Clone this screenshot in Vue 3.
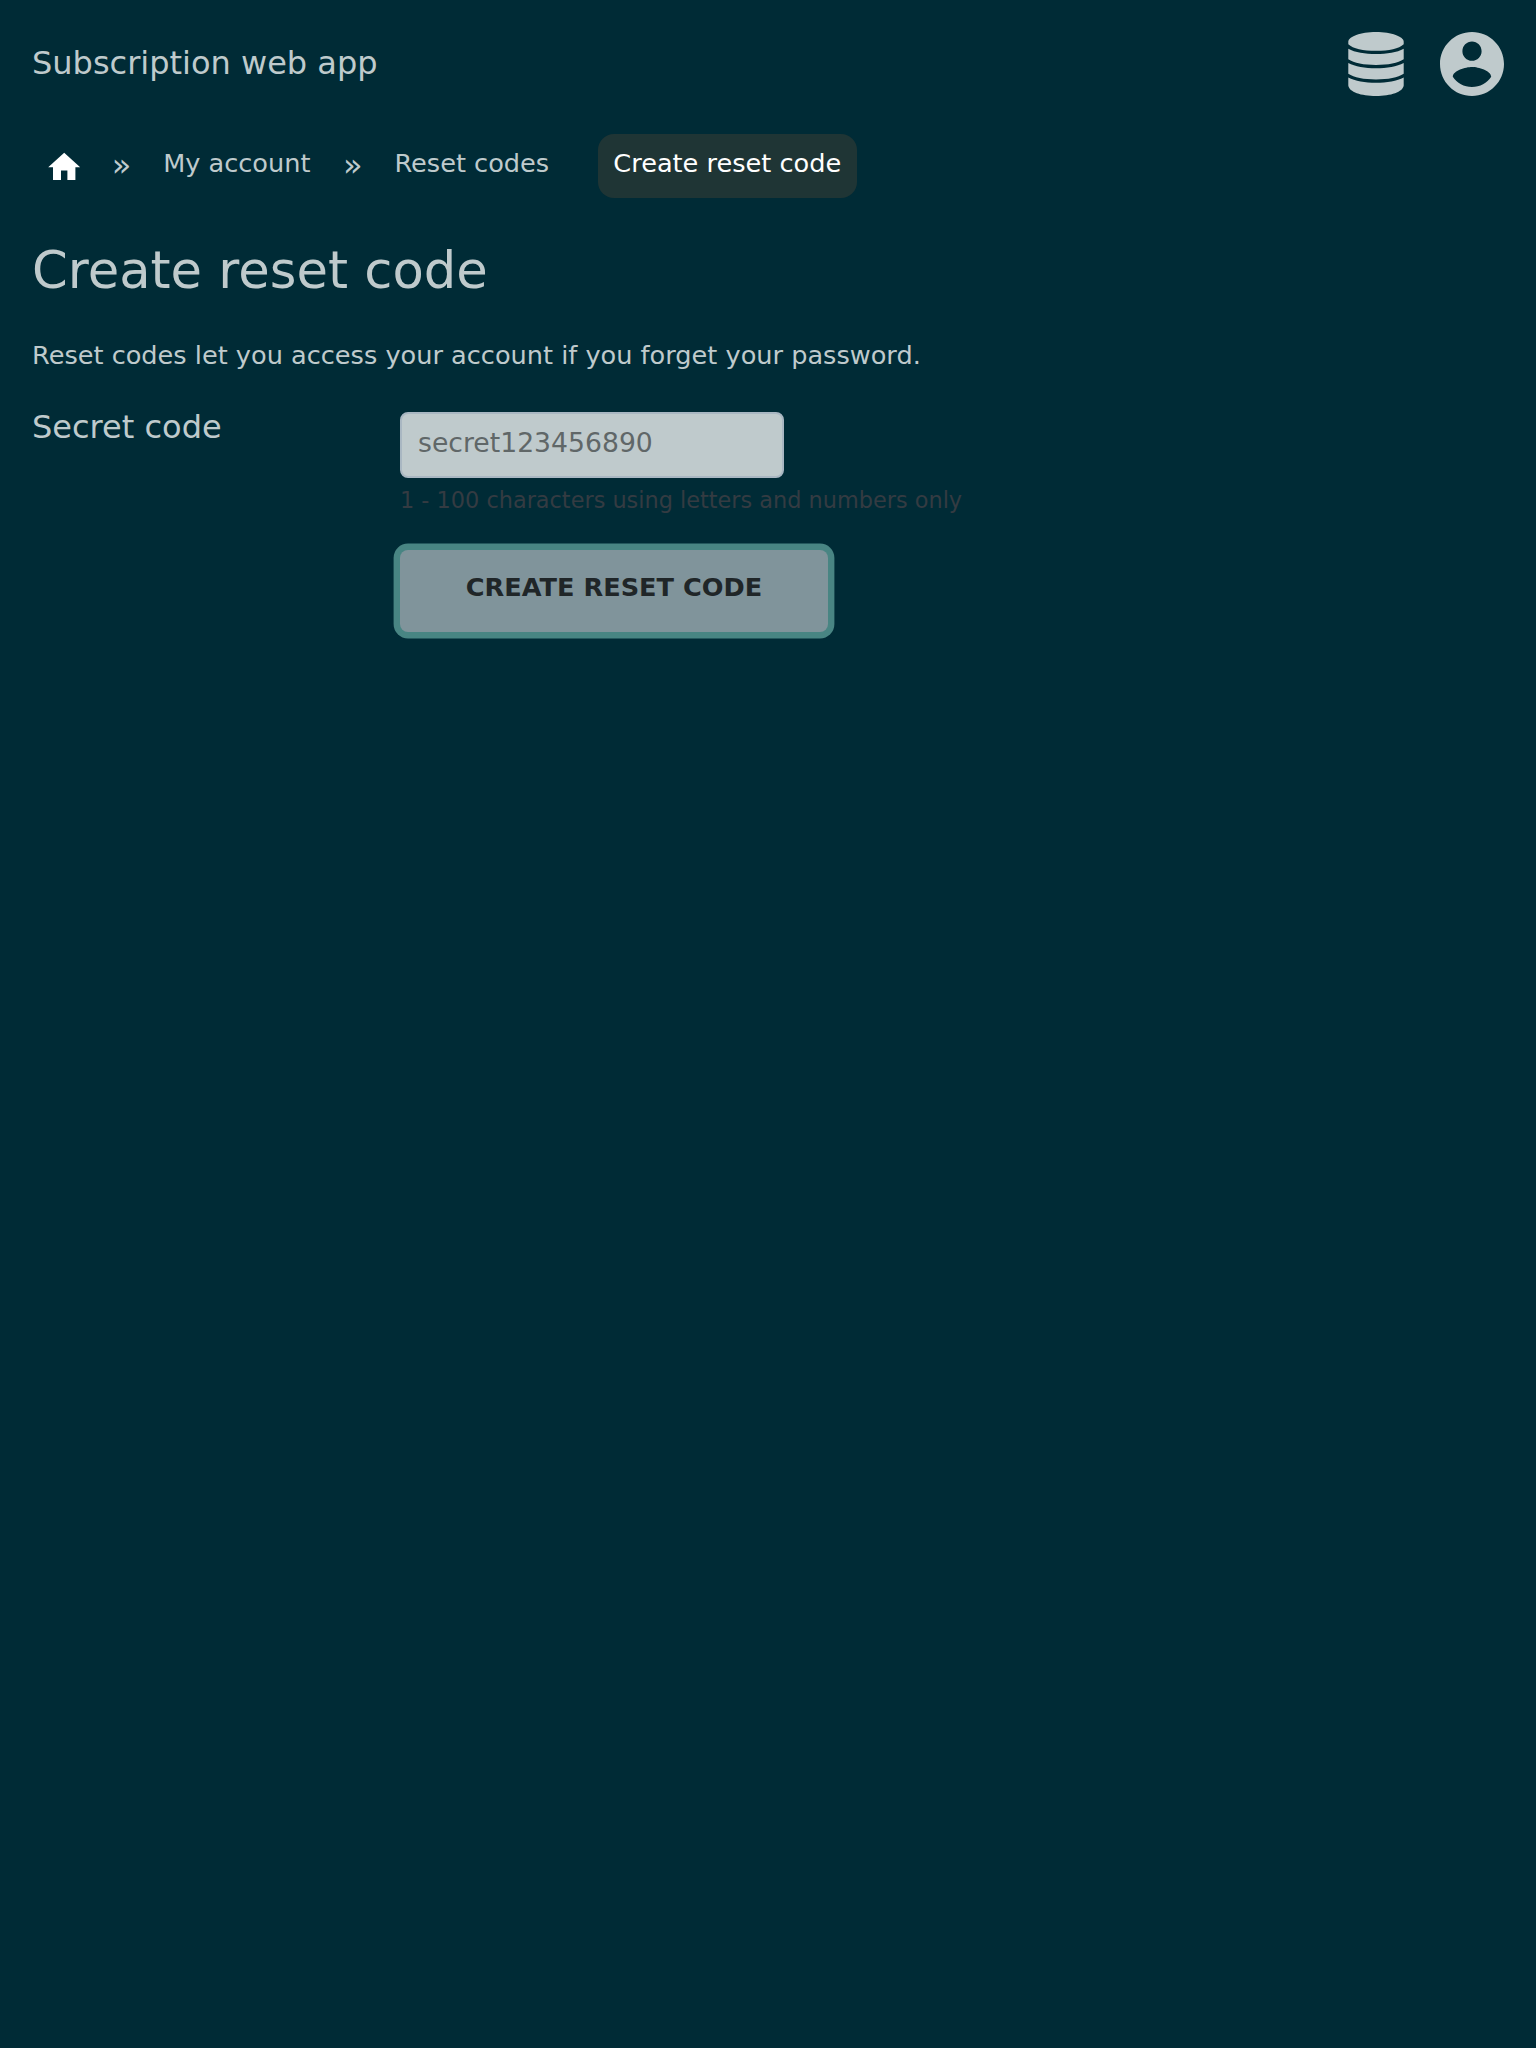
<script setup>
const trail = ['My account', 'Reset codes']
</script>

<template>
  <div class="page">
    <header class="bar">
      <a class="brand">Subscription web app</a>
      <nav class="icons">
        <svg class="db" viewBox="0 0 56 64">
          <path d="M28 0C43.500 0 55.700 4.600 55.700 9.700V12.200C51 16.700 41 18.800 28 18.800S5 16.700.3 12.200V9.700C.3 4.600 12.500 0 28 0z" />
          <path d="M.3 16.700C7 20.400 17 22 28 22S49 20.400 55.700 16.700V27.200C50 31 40 32.900 28 32.900S6 31 .3 27.200z" />
          <path d="M.3 31.100C7 34.800 17 36.300 28 36.300S49 34.800 55.700 31.100V41.700C50 45.500 40 47.400 28 47.400S6 45.500.3 41.700z" />
          <path d="M.3 45.500C7 49.200 17 50.700 28 50.700S49 49.200 55.700 45.500V53.500C54.700 60 43 64 28 64S1.300 60 .3 53.500z" />
        </svg>
        <svg class="user" viewBox="2 2 20 20">
          <path d="M12 2C6.480 2 2 6.480 2 12s4.480 10 10 10 10-4.480 10-10S17.520 2 12 2zm0 3c1.660 0 3 1.340 3 3s-1.340 3-3 3-3-1.340-3-3 1.340-3 3-3zm0 14.200c-2.500 0-4.710-1.280-6-3.220.03-1.990 4-3.080 6-3.080 1.990 0 5.970 1.090 6 3.080-1.290 1.940-3.500 3.220-6 3.220z" />
        </svg>
      </nav>
    </header>

    <nav class="crumbs">
      <svg class="home" viewBox="0 0 24 24"><path d="M10 20v-6h4v6h5v-8h3L12 3 2 12h3v8z" /></svg>
      <template v-for="item in trail" :key="item">
        <span class="sep">»</span>
        <a class="crumb">{{ item }}</a>
      </template>
      <span class="current">Create reset code</span>
    </nav>

    <h1>Create reset code</h1>
    <p class="intro">Reset codes let you access your account if you forget your password.</p>

    <form class="form">
      <label for="code">Secret code</label>
      <div class="field">
        <input id="code" type="text" placeholder="secret123456890" />
        <small>1 - 100 characters using letters and numbers only</small>
        <button type="button">CREATE RESET CODE</button>
      </div>
    </form>
  </div>
</template>

<style>
body { background: #002b36; }
</style>

<style scoped>
.page {
  box-sizing: border-box;
  min-height: 2048px;
  padding: 32px;
  font-family: "DejaVu Sans", sans-serif;
  font-size: 25.6px;
  color: #bfcacc;
}
.bar {
  display: flex;
  align-items: center;
  justify-content: space-between;
  height: 64px;
}
.brand { font-size: 32px; line-height: 38px; margin-top: -2px; }
.icons { display: flex; gap: 36px; }
.icons svg { display: block; height: 64px; fill: #bfcacc; }
.db { width: 56px; }
.user { width: 64px; }
.crumbs {
  display: flex;
  align-items: center;
  height: 64px;
  margin-top: 38px;
  padding-left: 12.800px;
}
.home { width: 38.400px; height: 38.400px; margin-top: 2px; fill: #fff; }
.sep { margin: -2px 31.800px 0 32.600px; font-size: 32px; }
.home + .sep { margin-left: 28.600px; }
.crumb { margin-top: -6px; }
.current {
  box-sizing: border-box;
  height: 64px;
  margin-left: 48.600px;
  padding: 14px 16px 0 15.600px;
  border-radius: 16px;
  background: #1f3535;
  color: #fff;
  line-height: 30px;
}
h1 {
  margin: 40px 0 0;
  font-size: 51.200px;
  font-weight: 400;
  line-height: 64px;
}
.intro { margin: 34px 0 0; line-height: 38px; }
.form { display: flex; margin-top: 38px; }
label { width: 368px; flex: none; font-size: 32px; line-height: 30px; }
.field { display: flex; flex-direction: column; align-items: flex-start; }
input {
  box-sizing: border-box;
  width: 384px;
  height: 66px;
  padding: 0 16px 6px;
  border: 2px solid #a9b7c2;
  border-radius: 8px;
  background: #bfcacc;
  font: 26.667px "DejaVu Sans", sans-serif;
}
input::placeholder { color: #606768; opacity: 1; }
small { margin-top: 8px; font-size: 22.400px; line-height: 28px; color: #343b42; }
button {
  width: 428px;
  height: 82px;
  margin-top: 36px;
  padding: 0 0 8px;
  border: 0;
  border-radius: 8px;
  background: #80949b;
  box-shadow: 0 0 0 6.400px #488583;
  color: #202628;
  font: 700 25.600px "DejaVu Sans", sans-serif;
}
</style>
